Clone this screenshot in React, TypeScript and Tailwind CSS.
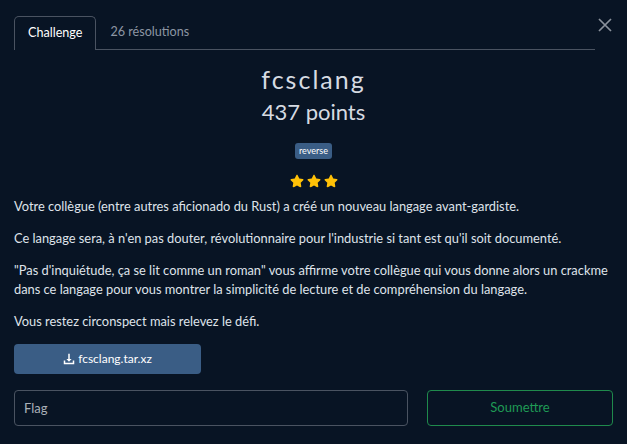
import { type FC } from "react";

const Star: FC = () => (
  <svg width="14" height="14" viewBox="0 0 576 512" className="fill-[#ffc107]">
    <path d="M259.3 17.8L194 150.2 47.9 171.5c-26.2 3.8-36.7 36.1-17.7 54.6l105.7 103-25 145.5c-4.5 26.3 23.2 46 46.4 33.7L288 439.6l130.7 68.7c23.2 12.2 50.9-7.4 46.4-33.7l-25-145.5 105.7-103c19-18.5 8.5-50.8-17.7-54.6L382 150.2 316.7 17.8c-11.7-23.6-45.6-23.9-57.4 0z" />
  </svg>
);

const App: FC = () => {
  return (
    <div
      className="w-[627px] h-[444px] bg-[#081424] text-[#dfe3ea] overflow-hidden px-[14px] pt-[16px]"
      style={{ fontFamily: "Lato, 'Noto Sans', sans-serif" }}
    >
      <div className="flex items-start">
        <div className="flex flex-1 border-b border-[#4a5361] h-[34px]">
          <div className="px-[13px] h-[34px] flex items-center text-[12.6px] text-white border border-b-0 border-[#4a5361] rounded-t-[5px] bg-[#081424] mb-[-1px]">
            Challenge
          </div>
          <div className="px-[14px] h-[33px] flex items-center text-[12.6px] text-[#8d96a3]">
            26 résolutions
          </div>
        </div>
        <button className="ml-[3px] mr-[1px] mt-[2px] text-[#8b929c]">
          <svg width="14" height="14" viewBox="0 0 14 14" stroke="currentColor" strokeWidth="1.7">
            <path d="M1 1l12 12M13 1L1 13" />
          </svg>
        </button>
      </div>

      <div className="flex flex-col items-center mt-[12px]">
        <h2 className="text-[25px] leading-[34px] tracking-[2px] font-normal text-[#d6dbe2]">fcsclang</h2>
        <h3 className="text-[22px] leading-[28px] font-normal text-[#d6dbe2] mt-[2px]">437 points</h3>
        <span className="mt-[17px] bg-[#3a5d85] rounded-[3px] px-[4px] text-[9px] leading-[16px] text-white">
          reverse
        </span>
        <div className="flex gap-[3px] mt-[15px]">
          <Star />
          <Star />
          <Star />
        </div>
      </div>

      <div className="mt-[9px] text-[12.85px] leading-[19px] flex flex-col gap-[13px]">
        <p>Votre collègue (entre autres aficionado du Rust) a créé un nouveau langage avant-gardiste.</p>
        <p>Ce langage sera, à n'en pas douter, révolutionnaire pour l'industrie si tant est qu'il soit documenté.</p>
        <p>
          "Pas d'inquiétude, ça se lit comme un roman" vous affirme votre collègue qui vous donne alors un crackme
          dans ce langage pour vous montrer la simplicité de lecture et de compréhension du langage.
        </p>
        <p>Vous restez circonspect mais relevez le défi.</p>
      </div>

      <button className="mt-[13px] w-[187px] h-[30px] bg-[#3a5d85] rounded-[4px] flex items-center justify-center gap-[3px] text-[12px] text-white">
        <svg width="12" height="12" viewBox="0 0 16 16" fill="currentColor">
          <path d="M7 1h2v7h2.5L8 11.5 4.5 8H7z" />
          <path d="M1 10h2v3h10v-3h2v5H1z" />
        </svg>
        fcsclang.tar.xz
      </button>

      <div className="mt-[16px] flex gap-[19px]">
        <input
          placeholder="Flag"
          className="w-[394px] h-[36px] rounded-[4px] border border-[#4a5361] bg-transparent px-[9px] text-[13px] text-[#dfe3ea] placeholder:text-[#aab0b8] outline-none"
        />
        <button className="flex-1 h-[36px] rounded-[4px] border border-[#1f8a4c] text-[13px] text-[#1f9a55]">
          Soumettre
        </button>
      </div>
    </div>
  );
};

export default App;
